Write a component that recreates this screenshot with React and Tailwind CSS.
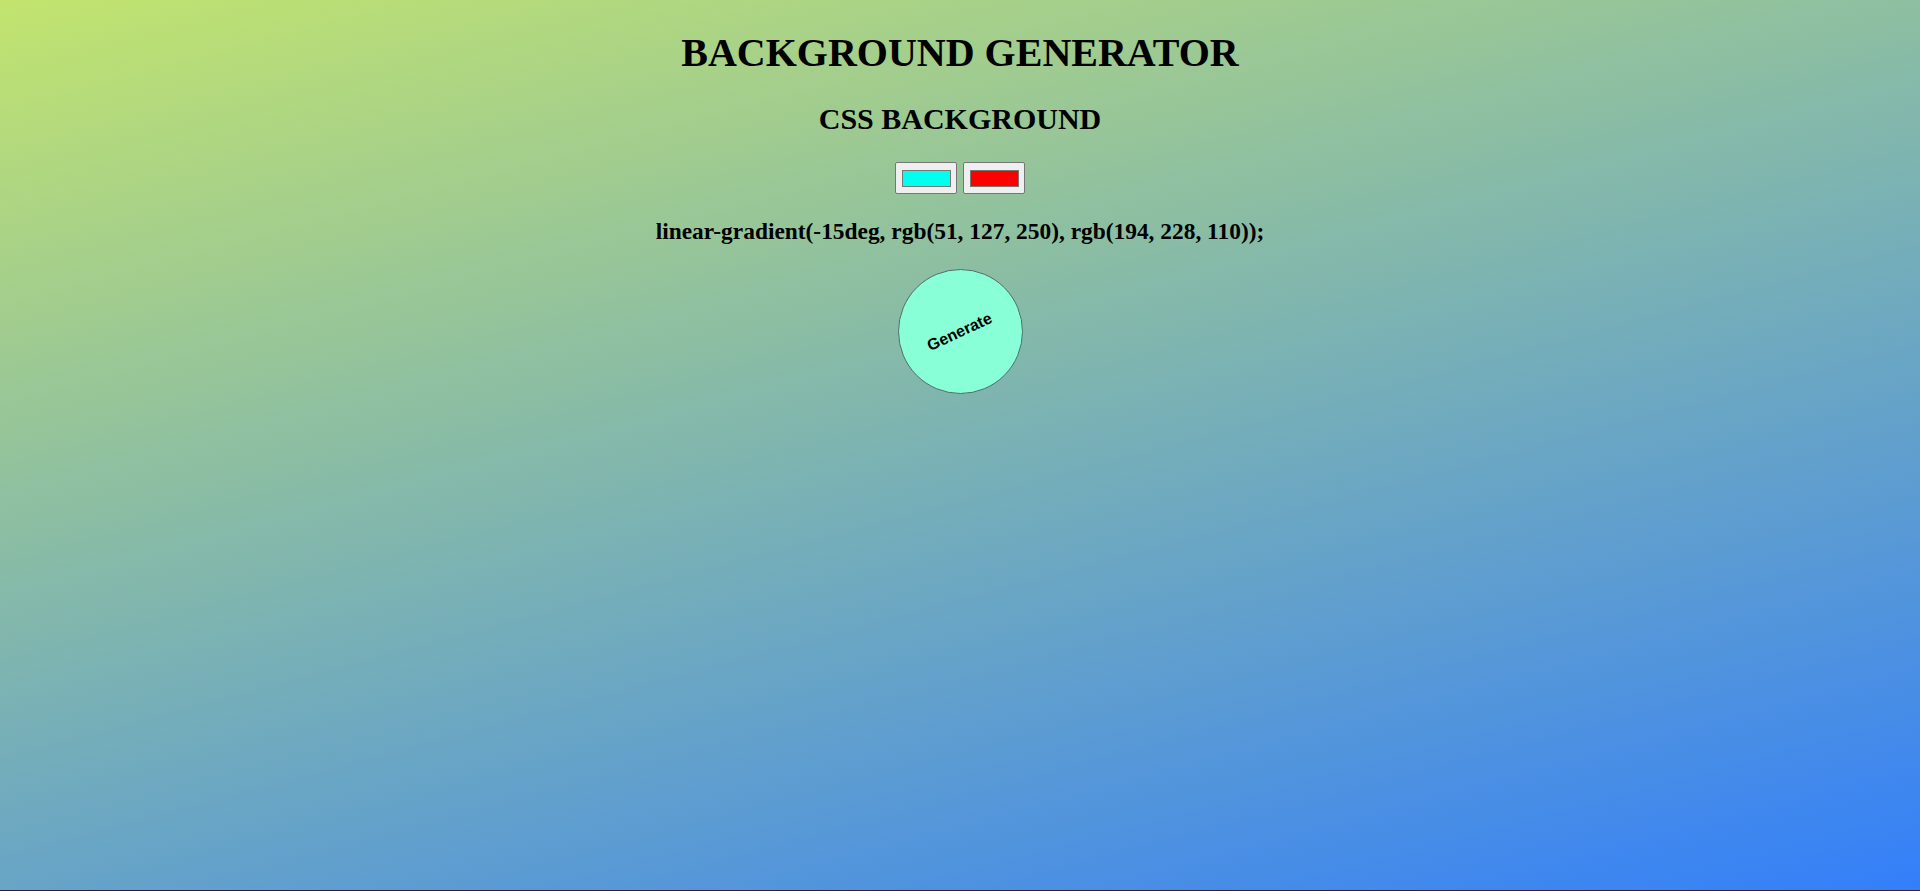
// Background generator page: two colour pickers and a rotated generate button
const FROM = "rgb(51, 127, 250)";
const TO = "rgb(194, 228, 110)";

function Swatch({ color }) {
  return (
    <div className="w-[62px] h-[32px] bg-[#efefef] border border-[#767676] rounded-[2px] flex items-center justify-center">
      <div className="w-[49px] h-[17px] border border-[#777777]" style={{ backgroundColor: color }}></div>
    </div>
  );
}

export default function App() {
  return (
    <div className="h-[891px] flex flex-col overflow-hidden">
      <div className="h-[890px] bg-[linear-gradient(-15deg,rgb(51,127,250),rgb(194,228,110))] font-['Liberation_Serif',serif] text-black flex flex-col items-center">
        {/* Headings */}
        <h1 className="mt-[30px] text-[40px] leading-[46px] font-bold">BACKGROUND GENERATOR</h1>
        <h2 className="mt-[26px] text-[30px] leading-[34px] font-bold">CSS BACKGROUND</h2>

        {/* Colour inputs */}
        <div className="mt-[26px] flex gap-[6px]">
          <Swatch color="#00ffee" />
          <Swatch color="#ff0000" />
        </div>

        {/* Current gradient */}
        <h3 className="mt-[24px] text-[23.4px] leading-[27px] font-bold">
          linear-gradient(-15deg, {FROM}, {TO});
        </h3>

        {/* Generate button */}
        <button className="mt-[24px] w-[125px] h-[125px] rounded-full bg-[#88ffd6] border border-[#4f6f66] flex items-center justify-center">
          <span className="-rotate-[25deg] font-['Liberation_Sans',sans-serif] font-bold text-[16px]">Generate</span>
        </button>
      </div>
      <div className="h-px bg-[linear-gradient(90deg,#2a1c3c,#4a1c22)]"></div>
    </div>
  );
}
